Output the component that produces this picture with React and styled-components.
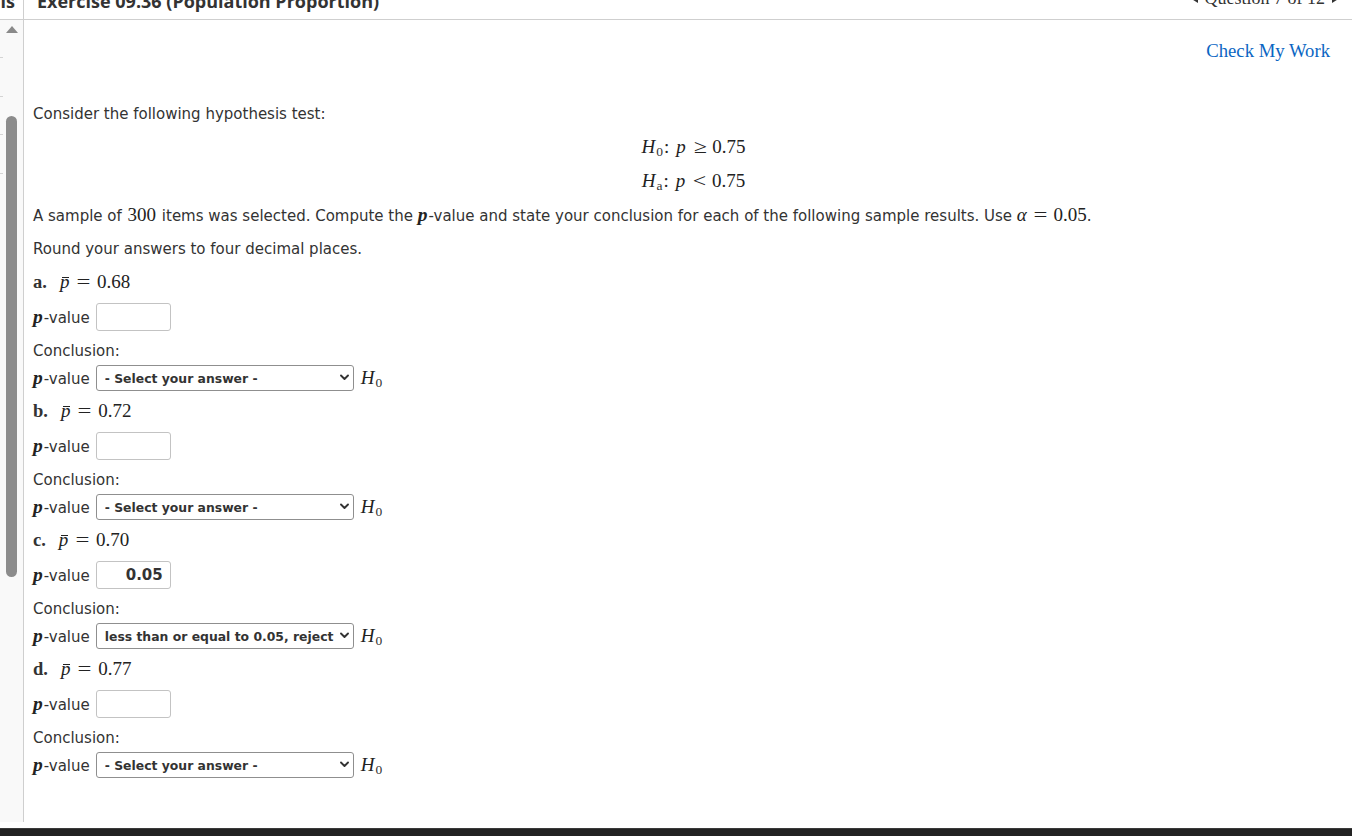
import React from "react";
import styled, { createGlobalStyle } from "styled-components";

const GlobalStyle = createGlobalStyle`
  html, body { margin: 0; padding: 0; background: #fff; overflow: hidden; }
  body { font-family: "DejaVu Sans", Verdana, sans-serif; color: #333; }
  * { box-sizing: border-box; }
`;

const Page = styled.div`
  width: 1352px;
  height: 836px;
  display: flex;
  flex-direction: column;
`;

/* ---------- header ---------- */
const TopBar = styled.header`
  height: 20px;
  flex-shrink: 0;
  display: flex;
  border-bottom: 1px solid #cfcfcf;
  overflow: hidden;
`;

const TopStub = styled.div`
  width: 24px;
  flex-shrink: 0;
  border-right: 1px solid #cfcfcf;
  display: flex;
  align-items: flex-end;
  justify-content: flex-end;
  padding: 0 8px 9px 0;
  font-family: "Open Sans", sans-serif;
  font-weight: 700;
  font-size: 18px;
  line-height: 18px;
  color: #333;
  white-space: nowrap;
`;

const Title = styled.h1`
  margin: 0;
  flex: 1;
  display: flex;
  align-items: flex-end;
  padding: 0 0 9px 13px;
  font-family: "Open Sans", sans-serif;
  font-weight: 700;
  font-size: 18px;
  line-height: 18px;
  color: #333;
  white-space: nowrap;
`;

const QuestionNav = styled.nav`
  display: flex;
  align-items: flex-end;
  gap: 7px;
  padding: 0 12px 12px 0;
  font-family: "Liberation Serif", "Times New Roman", serif;
  font-size: 18px;
  line-height: 18px;
  color: #333;
  white-space: nowrap;
`;

const NavArrow = styled.svg`
  width: 8px;
  height: 10px;
  margin-bottom: 4px;
  fill: #333;
`;

/* ---------- body ---------- */
const Body = styled.div`
  height: 802px;
  flex-shrink: 0;
  display: flex;
`;

const Rail = styled.aside`
  width: 24px;
  flex-shrink: 0;
  border-right: 1px solid #cfcfcf;
  display: flex;
  flex-direction: column;
  align-items: flex-start;
  padding-left: 6px;
  background:
    linear-gradient(#d4d4d4, #d4d4d4) 0 37px / 3px 1px no-repeat,
    linear-gradient(#d4d4d4, #d4d4d4) 0 76px / 3px 1px no-repeat,
    linear-gradient(#d4d4d4, #d4d4d4) 0 114px / 3px 1px no-repeat,
    linear-gradient(#d4d4d4, #d4d4d4) 0 153px / 3px 1px no-repeat,
    #f9f9f9;
`;

const UpArrow = styled.div`
  width: 0;
  height: 0;
  margin-top: 6px;
  border-left: 6px solid transparent;
  border-right: 6px solid transparent;
  border-bottom: 7px solid #8a8a8a;
`;

const Thumb = styled.div`
  width: 11px;
  height: 461px;
  margin-top: 83px;
  border-radius: 6px;
  background: #8c8c8c;
`;

const Content = styled.main`
  flex: 1;
  min-width: 0;
  display: flex;
  flex-direction: column;
  padding: 20px 22px 0 9px;
  font-size: 15px;
  color: #333;
`;

const ToolRow = styled.div`
  height: 22px;
  display: flex;
  justify-content: flex-end;
  align-items: center;
`;

const CheckLink = styled.a`
  font-family: "Liberation Serif", Georgia, serif;
  font-size: 18.7px;
  color: #0b66c3;
  text-decoration: none;
  cursor: pointer;
`;

const Line = styled.div`
  height: 20px;
  line-height: 20px;
  margin-top: ${(p) => p.$gap || 0}px;
  white-space: nowrap;
  text-align: ${(p) => (p.$center ? "center" : "left")};
  padding-left: ${(p) => (p.$center ? 24 : 0)}px;
`;

const FieldRow = styled.div`
  height: ${(p) => p.$h}px;
  margin-top: ${(p) => p.$gap || 0}px;
  display: flex;
  align-items: center;
  gap: 6px;
  white-space: nowrap;
`;

/* ---------- math ---------- */
const M = styled.span`
  font-family: "Liberation Serif", "Times New Roman", serif;
  font-size: 19px;
  color: #222;
  margin: 0 ${(p) => p.$pad || 0}px;
`;

const MI = styled.i`
  font-family: "Liberation Serif", "Times New Roman", serif;
  font-style: italic;
  font-size: 19px;
  color: #222;
`;

const BoldP = styled.b`
  font-family: "Liberation Serif", "Times New Roman", serif;
  font-style: italic;
  font-weight: 700;
  font-size: 19.5px;
  color: #222;
  margin-right: 1px;
`;

const Sub = styled.sub`
  font-family: "Liberation Serif", "Times New Roman", serif;
  font-size: 13.5px;
  font-style: normal;
  vertical-align: -3px;
  line-height: 0;
  margin-left: 1px;
`;

const Rel = styled.span`
  display: inline-block;
  margin: 0 ${(p) => p.$r ?? 7}px 0 ${(p) => p.$l ?? 7}px;
  transform: scaleX(${(p) => p.$sx ?? 1});
`;

const PartLabel = styled.b`
  font-family: "Liberation Serif", "Times New Roman", serif;
  font-weight: 700;
  font-size: 18.5px;
  color: #333;
  margin-right: 13px;
`;

const PBar = styled.span`
  position: relative;
  display: inline-block;
  line-height: 1;
  &::before {
    content: "";
    position: absolute;
    left: 2px;
    right: 0;
    top: 5px;
    height: 1px;
    background: currentColor;
  }
`;

/* ---------- fields ---------- */
const PLabel = styled.span`
  line-height: 20px;
`;

const AnswerInput = styled.input`
  width: 75px;
  height: 28px;
  border: 1px solid #c3c3c3;
  border-radius: 3px;
  padding: 0 7px 0 4px;
  text-align: right;
  font-family: "DejaVu Sans", Verdana, sans-serif;
  font-weight: 700;
  font-size: 15px;
  color: #333;
  background: #fff;
  outline: none;
`;

const SelectWrap = styled.div`
  position: relative;
  width: 258px;
  height: 26px;
`;

const Select = styled.select`
  appearance: none;
  -webkit-appearance: none;
  width: 100%;
  height: 100%;
  border: 1px solid #8f8f8f;
  border-radius: 3px;
  padding: 0 14px 0 8px;
  background: #fff;
  font-family: "DejaVu Sans", Verdana, sans-serif;
  font-weight: 700;
  font-size: 12.4px;
  color: #333;
  outline: none;
`;

const Chevron = styled.svg`
  position: absolute;
  right: 5px;
  top: 9px;
  width: 9px;
  height: 7px;
  pointer-events: none;
`;

const HRef = styled.span`
  margin-left: ${(p) => p.$ml || 0}px;
`;

const H0 = ({ ml }) => (
  <HRef $ml={ml}>
    <MI>H</MI>
    <Sub>0</Sub>
  </HRef>
);

/* ---------- footer ---------- */
const FooterGap = styled.div`
  height: 6px;
  flex-shrink: 0;
`;

const DarkBar = styled.footer`
  height: 8px;
  flex-shrink: 0;
  background: #222;
  border-top: 1px solid #3a3a3a;
`;

const OPTIONS = [
  "- Select your answer -",
  "greater than 0.05, do not reject",
  "less than or equal to 0.05, reject",
];

const parts = [
  { key: "a", pbar: "0.68", value: "", choice: OPTIONS[0] },
  { key: "b", pbar: "0.72", value: "", choice: OPTIONS[0] },
  { key: "c", pbar: "0.70", value: "0.05", choice: OPTIONS[2] },
  { key: "d", pbar: "0.77", value: "", choice: OPTIONS[0] },
];

const PValueLabel = () => (
  <PLabel>
    <BoldP>p</BoldP>-value
  </PLabel>
);

function Part({ part, first }) {
  return (
    <>
      <Line $gap={first ? 13 : 10}>
        <PartLabel>{part.key}.</PartLabel>
        <MI>
          <PBar>p</PBar>
        </MI>
        <M>
          <Rel $l={9} $r={8} $sx={1.3}>=</Rel>
          {part.pbar}
        </M>
      </Line>
      <FieldRow $h={28} $gap={11}>
        <PValueLabel />
        <AnswerInput readOnly value={part.value} />
      </FieldRow>
      <Line $gap={10}>Conclusion:</Line>
      <FieldRow $h={26} $gap={4}>
        <PValueLabel />
        <SelectWrap>
          <Select value={part.choice} onChange={() => {}}>
            {OPTIONS.map((o) => (
              <option key={o} value={o}>
                {o}
              </option>
            ))}
          </Select>
          <Chevron viewBox="0 0 9 7">
            <path d="M1 1.5 L4.5 5 L8 1.5" fill="none" stroke="#333" strokeWidth="1.9" strokeLinecap="round" strokeLinejoin="round" />
          </Chevron>
        </SelectWrap>
        <H0 ml={1} />
      </FieldRow>
    </>
  );
}

export default function App() {
  return (
    <>
      <GlobalStyle />
      <Page>
        <TopBar>
          <TopStub>is</TopStub>
          <Title>Exercise 09.36 (Population Proportion)</Title>
          <QuestionNav>
            <NavArrow viewBox="0 0 8 10">
              <path d="M8 0 L0 5 L8 10 Z" />
            </NavArrow>
            <span>Question 7 of 12</span>
            <NavArrow viewBox="0 0 8 10">
              <path d="M0 0 L8 5 L0 10 Z" />
            </NavArrow>
          </QuestionNav>
        </TopBar>
        <Body>
          <Rail>
            <UpArrow />
            <Thumb />
          </Rail>
          <Content>
            <ToolRow>
              <CheckLink>Check My Work</CheckLink>
            </ToolRow>
            <Line $gap={42}>Consider the following hypothesis test:</Line>
            <Line $gap={13} $center>
              <MI>H</MI>
              <Sub>0</Sub>
              <M>
                <Rel $l={1} $r={7}>:</Rel>
                <MI>p</MI>
                <Rel $l={9} $r={7} $sx={1.25}>≥</Rel>0.75
              </M>
            </Line>
            <Line $gap={14} $center>
              <MI>H</MI>
              <Sub>a</Sub>
              <M>
                <Rel $l={1} $r={7}>:</Rel>
                <MI>p</MI>
                <Rel $l={9} $r={7} $sx={1.25}>&lt;</Rel>0.75
              </M>
            </Line>
            <Line $gap={14}>
              A sample of <M $pad={1}>300</M> items was selected. Compute the <BoldP>p</BoldP>-value and state your
              conclusion for each of the following sample results. Use{" "}
              <M>
                <MI>α</MI>
                <Rel $l={8} $r={8} $sx={1.3}>=</Rel>0.05
              </M>
              .
            </Line>
            <Line $gap={14}>Round your answers to four decimal places.</Line>
            {parts.map((p, i) => (
              <Part key={p.key} part={p} first={i === 0} />
            ))}
          </Content>
        </Body>
        <FooterGap />
        <DarkBar />
      </Page>
    </>
  );
}
